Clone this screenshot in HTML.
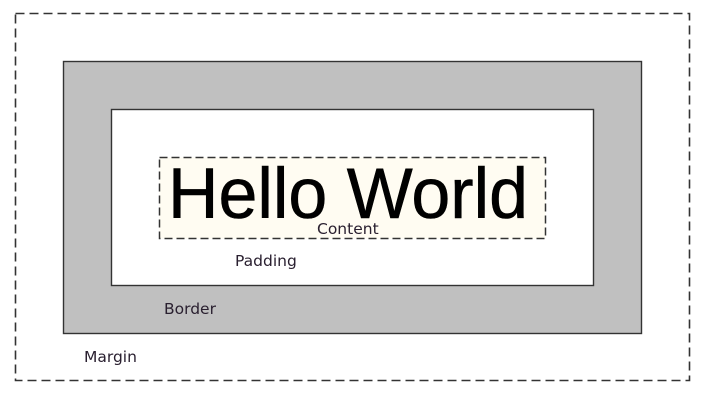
<!DOCTYPE html>
<html><head><style>body{margin:0;background:#fff;}svg{display:block}</style></head><body>
<svg width="707" height="400" xmlns="http://www.w3.org/2000/svg">
<rect x="15.5" y="13.5" width="674" height="367" fill="none" stroke="#333" stroke-width="1.6" stroke-dasharray="9,5"/>
<rect x="63.5" y="61.5" width="578" height="272" fill="#c0c0c0" stroke="#333" stroke-width="1.4"/>
<rect x="111.5" y="109.5" width="482" height="176" fill="#fff" stroke="#333" stroke-width="1.4"/>
<rect x="159.5" y="157.5" width="386" height="81" fill="#fffcf2" stroke="#333" stroke-width="1.5" stroke-dasharray="8,4"/>
<text x="168" y="218" font-family="Liberation Sans, Arial, sans-serif" font-size="71" textLength="360" lengthAdjust="spacingAndGlyphs" fill="#000" stroke="#000" stroke-width="0.6">Hello World</text>
<g font-family="DejaVu Sans, sans-serif" font-size="15.5" fill="#2a2030">
<text x="317" y="234">Content</text>
<text x="235" y="266">Padding</text>
<text x="164" y="314">Border</text>
<text x="84" y="362">Margin</text>
</g>
</svg>
</body></html>
